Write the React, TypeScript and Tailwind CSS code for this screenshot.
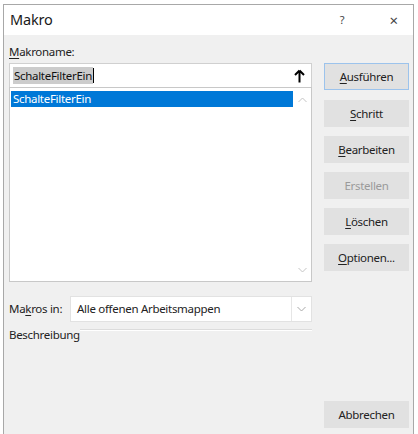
import React from 'react'

const font = { fontFamily: '"Segoe UI", "Noto Sans", "Open Sans", sans-serif' }

function Btn({ children, disabled, primary }: { children: React.ReactNode; disabled?: boolean; primary?: boolean }) {
  return (
    <div
      className={
        'h-[27px] w-[85px] flex items-center justify-center text-[11.5px] tracking-[-0.3px] border bg-[#e1e1e1] ' +
        (primary ? 'border-[#9cc3ec] ' : 'border-[#e1e1e1] ') +
        (disabled ? 'text-[#9a9a9a]' : 'text-[#222]')
      }
    >
      {children}
    </div>
  )
}

export default function App() {
  return (
    <div className="w-[418px] h-[434px] bg-white pl-[3px] pr-[4px] pt-[4px]" style={font}>
      <div className="h-full flex flex-col border-l border-t border-r border-[#a8a8a8] bg-[#f0f0f0]">
        {/* title bar */}
        <div className="h-[30px] bg-white flex items-center pl-[6px] pr-[15px] text-[#1a1a1a]">
          <span className="text-[14.5px] tracking-[-0.2px]">Makro</span>
          <span className="ml-auto mr-[45px] text-[11px] text-[#444]">?</span>
          <span className="text-[15px] text-[#444] leading-none">×</span>
        </div>

        <div className="flex flex-1 pl-[5px] pr-[4px] pb-[6px] text-[11.5px] tracking-[-0.3px] text-[#222]">
          {/* left column */}
          <div className="w-[306px] flex flex-col">
            <div className="mt-[9px] h-[19px] leading-[16px]">
              <span className="underline underline-offset-2">M</span>akroname:
            </div>
            <div className="h-[24px] bg-white border border-[#d0d0d0] border-b-0 flex items-center pl-[3px]">
              <span className="bg-[#cccccc] text-[#111] px-[1px] leading-[17px]">SchalteFilterEin</span>
              <span className="w-px h-[15px] bg-black" />
              <div className="ml-auto h-full w-[23px] flex items-center justify-center">
                <svg width="11" height="14" viewBox="0 0 11 14">
                  <path d="M5.5 1.5 L1 6 M5.5 1.5 L10 6 M5.5 1.5 V13.5" stroke="#000" strokeWidth="2" fill="none" />
                </svg>
              </div>
            </div>
            <div className="h-[195px] bg-white border border-[#c8c8c8] flex">
              <div className="flex-1 pt-[3px] pl-[1px]">
                <div className="h-[16px] bg-[#0078d7] text-white leading-[16px] pl-[2px]">SchalteFilterEin</div>
              </div>
              <div className="w-[18px] flex flex-col items-center justify-between pt-[9px] pb-[8px]">
                <svg width="9" height="6" viewBox="0 0 9 6">
                  <path d="M0.5 5 L4.5 1 L8.5 5" stroke="#c4c4c4" fill="none" />
                </svg>
                <svg width="9" height="6" viewBox="0 0 9 6">
                  <path d="M0.5 1 L4.5 5 L8.5 1" stroke="#c4c4c4" fill="none" />
                </svg>
              </div>
            </div>
            <div className="mt-[14px] flex items-center h-[26px]">
              <div className="w-[61px] whitespace-nowrap">
                Ma<span className="underline underline-offset-2">k</span>ros in:
              </div>
              <div className="flex-1 h-full bg-white border border-[#e2e2e2] flex items-center pl-[6px]">
                <span>Alle offenen Arbeitsmappen</span>
                <div className="ml-auto h-full w-[20px] border-l border-[#e6e6e6] flex items-center justify-center">
                  <svg width="9" height="6" viewBox="0 0 9 6">
                    <path d="M0.5 1 L4.5 5 L8.5 1" stroke="#a8a8a8" fill="none" />
                  </svg>
                </div>
              </div>
            </div>
            <div className="mt-[5px] flex items-start">
              <span className="leading-[16px]">Beschreibung</span>
              <div className="flex-1 mt-[2px] h-[2px] border-t border-[#dcdcdc] border-b border-b-white" />
            </div>
          </div>

          {/* right column */}
          <div className="ml-[12px] flex flex-col gap-[9px] pt-[28px]">
            <Btn primary>
              <span><span className="underline underline-offset-2">A</span>usführen</span>
            </Btn>
            <div className="mt-[1px]">
              <Btn>
                <span><span className="underline underline-offset-2">S</span>chritt</span>
              </Btn>
            </div>
            <Btn>
              <span><span className="underline underline-offset-2">B</span>earbeiten</span>
            </Btn>
            <Btn disabled>Erstellen</Btn>
            <Btn>
              <span><span className="underline underline-offset-2">L</span>öschen</span>
            </Btn>
            <Btn>
              <span><span className="underline underline-offset-2">O</span>ptionen...</span>
            </Btn>
            <div className="mt-auto">
              <Btn>Abbrechen</Btn>
            </div>
          </div>
        </div>
      </div>
    </div>
  )
}
